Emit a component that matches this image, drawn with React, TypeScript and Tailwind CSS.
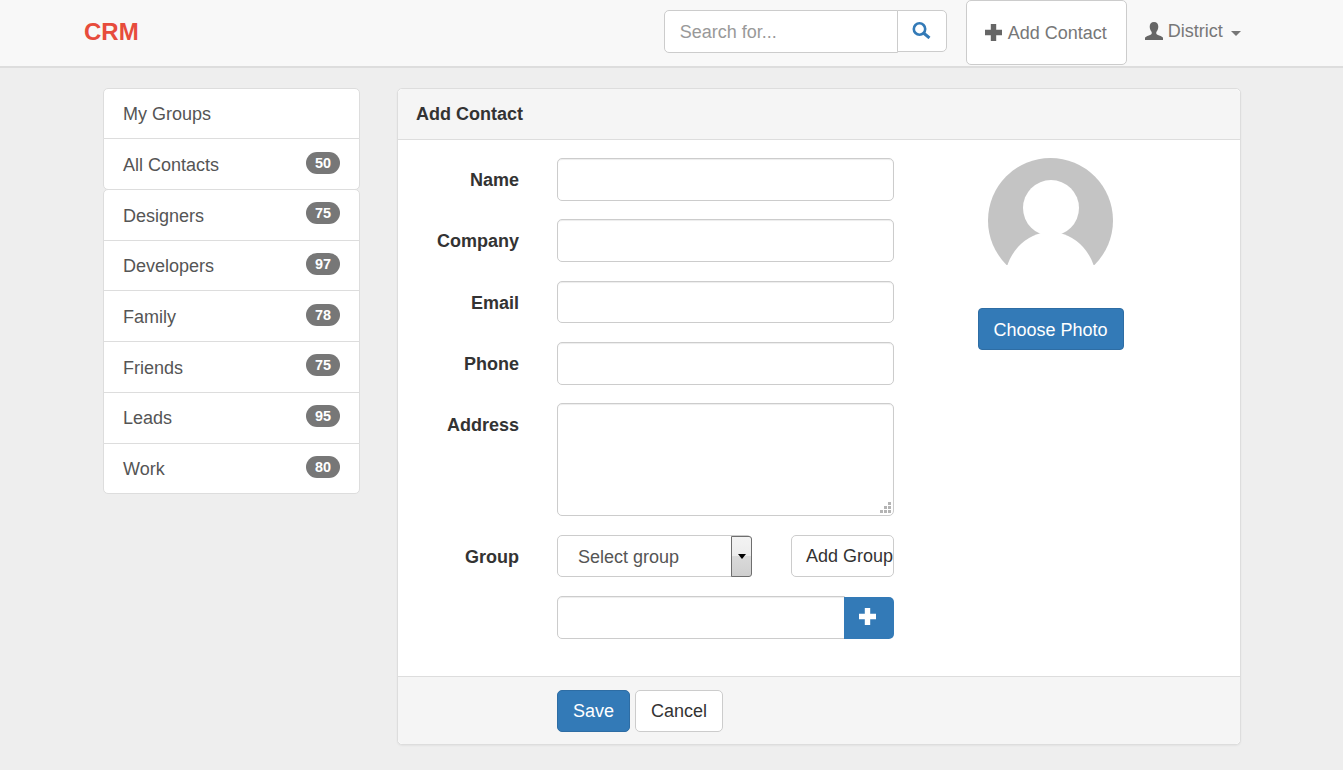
const Plus = ({ className }: { className: string }) => (
  <svg viewBox="0 0 17 17" className={className} fill="currentColor"><path d="M5.800 0h5.400v5.800H17v5.400h-5.800V17H5.800v-5.800H0V5.800h5.800z" /></svg>
);

const User = ({ className }: { className: string }) => (
  <svg viewBox="0 0 18 18" className={className} fill="currentColor">
    <path d="M9 0c2.800 0 4.300 2 4.300 4.800 0 2.200-1 4.200-2 5.200v1.500c0 .8 1 1.300 2.900 2 2 .8 3.800 1.400 3.800 2.500V18H0v-2c0-1.100 1.800-1.700 3.800-2.500 1.900-.7 2.900-1.200 2.900-2V10c-1-1-2-3-2-5.200C4.700 2 6.200 0 9 0z" />
  </svg>
);

const Search = () => (
  <svg viewBox="0 0 19 17" className="h-[17px] w-[19px] text-[#337ab7]" fill="none" stroke="currentColor">
    <circle cx="7.500" cy="7" r="5.700" strokeWidth="2.600" />
    <path d="M11.500 11l6 5" strokeWidth="3" />
  </svg>
);

const Avatar = () => (
  <svg viewBox="0 0 125 125" className="h-[125px] w-[125px]">
    <circle cx="62.500" cy="62.500" r="62.500" fill="#c4c4c4" />
    <circle cx="63" cy="50" r="28" fill="#fff" />
    <ellipse cx="62.500" cy="125" rx="46" ry="51" fill="#fff" />
    <rect x="0" y="107" width="125" height="18" fill="#fff" />
  </svg>
);

const ResizeDots = () => (
  <svg viewBox="0 0 11 11" className="pointer-events-none absolute bottom-[3px] right-[3px] h-[11px] w-[11px]" fill="#b4b4b4">
    <rect x="8" y="0" width="3" height="3" />
    <rect x="4" y="4" width="3" height="3" />
    <rect x="8" y="4" width="3" height="3" />
    <rect x="0" y="8" width="3" height="3" />
    <rect x="4" y="8" width="3" height="3" />
    <rect x="8" y="8" width="3" height="3" />
  </svg>
);

const Row = ({ label, count, rounded, height = "h-[51.7px]" }: { label: string; count?: number; rounded: string; height?: string }) => (
  <div className={`-mb-px flex ${height} items-center justify-between border border-[#ddd] bg-white pl-[19px] pr-[19px] text-[#555] ${rounded}`}>
    <span className="pt-[3px]">{label}</span>
    {count !== undefined && (
      <span className="-mt-[3px] flex h-[22px] w-[34px] items-center justify-center rounded-full bg-[#777] text-[14.400px] font-bold leading-none text-white">
        {count}
      </span>
    )}
  </div>
);

const fieldClass =
  "block w-[337px] rounded-[5px] border border-[#ccc] bg-white shadow-[inset_0_1px_1px_rgba(0,0,0,0.075)] outline-none";

const Label = ({ children }: { children: string }) => (
  <label className="w-[121px] pt-[10px] text-right font-bold leading-[25.700px] text-[#333]">{children}</label>
);

const Field = ({ label }: { label: string }) => (
  <div className="mb-[18.600px] flex gap-[38px]">
    <Label>{label}</Label>
    <input aria-label={label} className={`${fieldClass} h-[42.700px]`} />
  </div>
);

const groups = [
  ["Designers", 75],
  ["Developers", 97],
  ["Family", 78],
  ["Friends", 75],
  ["Leads", 95],
  ["Work", 80],
] as const;

export default function App() {
  return (
    <div className="min-h-screen bg-[#eee] text-[18px] leading-[25.714px] text-[#333] [font-family:'Liberation_Sans',Arial,sans-serif]">
      <nav className="flex h-[68px] items-start border-b-2 border-[#ddd] bg-[#f8f8f8] pl-[84px] text-[#777]">
        <div className="mt-[17px] text-[24px] font-bold leading-[30px] text-[#e74c3c]">CRM</div>
        <div className="ml-[525px] mt-[10px] flex items-start">
          <input
            placeholder="Search for..."
            className="h-[43px] w-[234px] rounded-l-[5px] border border-[#ccc] bg-white pl-[15px] pt-[2px] text-[18px] outline-none placeholder:text-[#999]"
          />
          <button className="-ml-px flex h-[42px] w-[50px] items-center justify-center rounded-r-[5px] border border-[#ccc] bg-white pb-[2px]">
            <Search />
          </button>
        </div>
        <button className="ml-[19px] flex h-[65px] w-[161px] items-center gap-[6px] rounded-[5px] border border-[#ccc] bg-white pl-[18px] text-[#777]">
          <Plus className="h-[17px] w-[17px] text-[#666]" />
          <span className="pt-[2px]">Add Contact</span>
        </button>
        <div className="ml-[18px] mt-[19px] flex h-[26px] items-center text-[#777]">
          <User className="-mt-[3px] h-[18px] w-[18px] text-[#666]" />
          <span className="ml-[5px]">District</span>
          <span className="ml-[8px] mt-[3px] h-0 w-0 border-x-[5px] border-t-[5px] border-x-transparent border-t-[#777]" />
        </div>
      </nav>

      <main className="flex items-start gap-[37px] pl-[103px] pt-[20px]">
        <aside className="w-[257px]">
          <Row label="My Groups" rounded="rounded-t-[5px]" height="h-[51.4px]" />
          <Row label="All Contacts" count={50} rounded="rounded-b-[5px]" />
          {groups.map(([label, count], i) => (
            <Row
              key={label}
              label={label}
              count={count}
              rounded={i === 0 ? "rounded-t-[5px]" : i === groups.length - 1 ? "rounded-b-[5px]" : ""}
            />
          ))}
        </aside>

        <section className="w-[844px] rounded-[5px] border border-[#ddd] bg-white shadow-[0_1px_2px_rgba(0,0,0,0.05)]">
          <header className="flex h-[51px] items-center rounded-t-[5px] border-b border-[#ddd] bg-[#f5f5f5] pl-[18px] pt-[2px] font-bold">
            Add Contact
          </header>
          <div className="flex h-[536px] pt-[18px]">
            <div className="w-[496px]">
              <Field label="Name" />
              <Field label="Company" />
              <Field label="Email" />
              <Field label="Phone" />
              <div className="mb-[18.600px] flex gap-[38px]">
                <Label>Address</Label>
                <div className="relative">
                  <textarea aria-label="Address" className={`${fieldClass} h-[113px] resize-none`} />
                  <ResizeDots />
                </div>
              </div>
              <div className="mb-[18.600px] flex gap-[38px]">
                <Label>Group</Label>
                <div className="flex w-[337px] justify-between">
                  <div className="flex h-[42.700px] w-[195px] items-center justify-between rounded-[5px] border border-[#ccc] bg-white pl-[20px] text-[#555]">
                    <span className="pt-[3px]">Select group</span>
                    <span className="-mr-px flex h-[41px] w-[21px] items-center justify-center rounded-r-[3px] border border-[#6e6e6e] bg-[linear-gradient(#f3f3f3_0%,#ececec_50%,#dadada_50%,#cfcfcf_100%)]">
                      <span className="h-0 w-0 border-x-[4.500px] border-t-[5px] border-x-transparent border-t-black" />
                    </span>
                  </div>
                  <button className="h-[42px] w-[103px] overflow-hidden whitespace-nowrap rounded-[5px] border border-[#ccc] bg-white pl-[14px] pt-[3px] text-left text-[#333]">
                    Add Group
                  </button>
                </div>
              </div>
              <div className="flex pl-[159px]">
                <input aria-label="New group" className="h-[42.700px] w-[288px] rounded-l-[5px] border border-[#ccc] bg-white shadow-[inset_0_1px_1px_rgba(0,0,0,0.075)] outline-none" />
                <button className="-ml-px mt-px flex h-[42px] w-[50px] items-center justify-center rounded-r-[5px] bg-[#337ab7] pb-[4px] pr-[3px] text-white" aria-label="Add">
                  <Plus className="h-[17px] w-[17px]" />
                </button>
              </div>
            </div>
            <div className="flex w-[313px] flex-col items-center">
              <Avatar />
              <button className="mt-[25px] h-[42px] w-[146px] rounded-[4px] border border-[#2e6da4] bg-[#337ab7] pt-[3px] text-white">
                Choose Photo
              </button>
            </div>
          </div>
          <footer className="flex h-[68px] items-start gap-[5px] rounded-b-[5px] border-t border-[#ddd] bg-[#f5f5f5] pl-[159px] pt-[13px]">
            <button className="h-[42px] w-[73px] rounded-[5px] border border-[#2e6da4] bg-[#337ab7] pt-[2px] text-white">Save</button>
            <button className="h-[42px] w-[88px] rounded-[5px] border border-[#ccc] bg-white pt-[2px] text-[#333]">Cancel</button>
          </footer>
        </section>
      </main>
    </div>
  );
}
